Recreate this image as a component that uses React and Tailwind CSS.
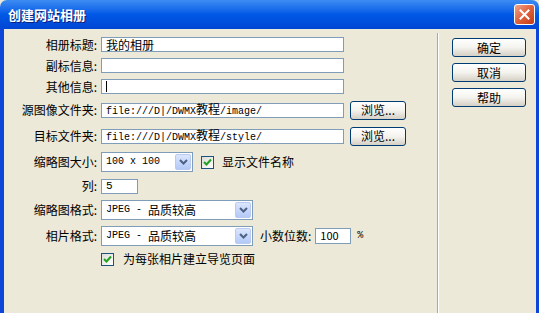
import React from "react";

const cjk = { fontFamily: '"Noto Sans CJK SC", "Noto Sans", sans-serif' };
const mono = { fontFamily: '"Liberation Mono", "Noto Sans CJK SC", monospace' };

function Label({ children }) {
  return <div className="w-[96px] shrink-0 pr-[3px] text-right text-[12px] leading-none text-black">{children}</div>;
}

function TextBox({ className = "", children, style }) {
  return (
    <div
      className={`flex h-[15px] items-center border border-[#7F9DB9] bg-white pl-[4px] text-[12px] leading-none text-black ${className}`}
      style={style}
    >
      {children}
    </div>
  );
}

function XpButton({ className = "", children }) {
  return (
    <div
      className={`flex h-[19px] items-center justify-center rounded-[3px] border border-[#003C74] bg-gradient-to-b from-white via-[#F4F3EE] to-[#D6D0C5] text-[12px] leading-none text-black ${className}`}
    >
      {children}
    </div>
  );
}

function Combo({ className = "", children }) {
  return (
    <div className={`flex h-[20px] items-stretch border border-[#7F9DB9] bg-white ${className}`}>
      <div className="flex flex-1 items-center whitespace-pre pl-[4px] text-[10px] leading-none text-black" style={mono}>
        {children}
      </div>
      <div className="m-px flex w-[16px] items-center justify-center rounded-[2px] border border-[#B9CBF3] bg-gradient-to-b from-[#DCE6FD] to-[#B3C9F7]">
        <svg width="9" height="6" viewBox="0 0 9 6">
          <path d="M1 1 L4.5 4.5 L8 1" fill="none" stroke="#4D6185" strokeWidth="2" />
        </svg>
      </div>
    </div>
  );
}

function Check() {
  return (
    <div className="flex h-[13px] w-[13px] shrink-0 items-center justify-center border border-[#1C5180] bg-gradient-to-br from-[#DCDCD7] to-white">
      <svg width="9" height="9" viewBox="0 0 9 9">
        <path d="M1 4 L3.5 6.5 L8 1.5" fill="none" stroke="#21A121" strokeWidth="2" />
      </svg>
    </div>
  );
}

function Path({ pre, cn, post }) {
  return (
    <span className="whitespace-pre text-[10px] leading-none" style={mono}>
      {pre}
      <span className="text-[12px] leading-none" style={cjk}>{cn}</span>
      {post}
    </span>
  );
}

export default function App() {
  return (
    <div className="h-[313px] w-[539px] overflow-hidden bg-[#ECE9D8]" style={cjk}>
      <div className="flex h-[29px] items-center justify-between rounded-t-[7px] bg-gradient-to-b from-[#3D8CF3] via-[#0058E6] to-[#0046D4] pl-[8px] pr-[4px]">
        <span className="text-[13px] font-bold text-white [text-shadow:1px_1px_#0A1F7A]">创建网站相册</span>
        <div className="flex h-[21px] w-[21px] items-center justify-center rounded-[3px] border border-white bg-gradient-to-br from-[#F0A58A] via-[#E0603A] to-[#C23A12]">
          <svg width="11" height="11" viewBox="0 0 11 11">
            <path d="M1.5 1.5 L9.5 9.5 M9.5 1.5 L1.5 9.5" stroke="white" strokeWidth="2" strokeLinecap="square" />
          </svg>
        </div>
      </div>
      <div className="flex h-[284px] border-l-[4px] border-r-[3px] border-l-[#0B46D8] border-r-[#0B46D8]">
        <div className="flex w-[433px] flex-col pt-[5px]">
          <div className="flex h-[21px] items-center">
            <Label>相册标题:</Label>
            <TextBox className="ml-[1px] w-[243px]">我的相册</TextBox>
          </div>
          <div className="flex h-[21px] items-center">
            <Label>副标信息:</Label>
            <TextBox className="ml-[1px] w-[243px]" />
          </div>
          <div className="flex h-[21px] items-center">
            <Label>其他信息:</Label>
            <TextBox className="ml-[1px] w-[243px]">
              <span className="h-[11px] w-px bg-black" />
            </TextBox>
          </div>
          <div className="flex h-[26px] items-center">
            <Label>源图像文件夹:</Label>
            <TextBox className="ml-[1px] w-[243px]">
              <Path pre="file:///D|/DWMX" cn="教程" post="/image/" />
            </TextBox>
            <XpButton className="ml-[6px] w-[56px]">浏览...</XpButton>
          </div>
          <div className="flex h-[26px] items-center">
            <Label>目标文件夹:</Label>
            <TextBox className="ml-[1px] w-[243px]">
              <Path pre="file:///D|/DWMX" cn="教程" post="/style/" />
            </TextBox>
            <XpButton className="ml-[6px] w-[56px]">浏览...</XpButton>
          </div>
          <div className="flex h-[26px] items-center">
            <Label>缩略图大小:</Label>
            <Combo className="ml-[1px] w-[92px]">100 x 100</Combo>
            <div className="ml-[8px]">
              <Check />
            </div>
            <span className="ml-[8px] text-[12px] leading-none">显示文件名称</span>
          </div>
          <div className="flex h-[22px] items-center">
            <Label>列:</Label>
            <TextBox className="ml-[1px] w-[37px]">
              <span className="text-[11px]" style={mono}>5</span>
            </TextBox>
          </div>
          <div className="flex h-[25px] items-center">
            <Label>缩略图格式:</Label>
            <Combo className="ml-[1px] w-[152px]">
              JPEG - <span className="text-[12px]" style={cjk}>品质较高</span>
            </Combo>
          </div>
          <div className="flex h-[27px] items-center">
            <Label>相片格式:</Label>
            <Combo className="ml-[1px] w-[152px]">
              JPEG - <span className="text-[12px]" style={cjk}>品质较高</span>
            </Combo>
            <span className="ml-[7px] text-[12px] leading-none">小数位数:</span>
            <TextBox className="ml-[4px] h-[16px] w-[36px]">
              <span className="text-[11px]">100</span>
            </TextBox>
            <span className="ml-[6px] text-[10px]" style={mono}>%</span>
          </div>
          <div className="flex h-[20px] items-center pl-[97px]">
            <Check />
            <span className="ml-[9px] text-[12px] leading-none">为每张相片建立导览页面</span>
          </div>
        </div>
        <div className="mt-[4px] w-px bg-[#ACA899]" />
        <div className="mt-[4px] w-px bg-white" />
        <div className="flex flex-col gap-[6px] pl-[13px] pt-[9px]">
          <XpButton className="w-[74px]">确定</XpButton>
          <XpButton className="w-[74px]">取消</XpButton>
          <XpButton className="w-[74px]">帮助</XpButton>
        </div>
      </div>
    </div>
  );
}
